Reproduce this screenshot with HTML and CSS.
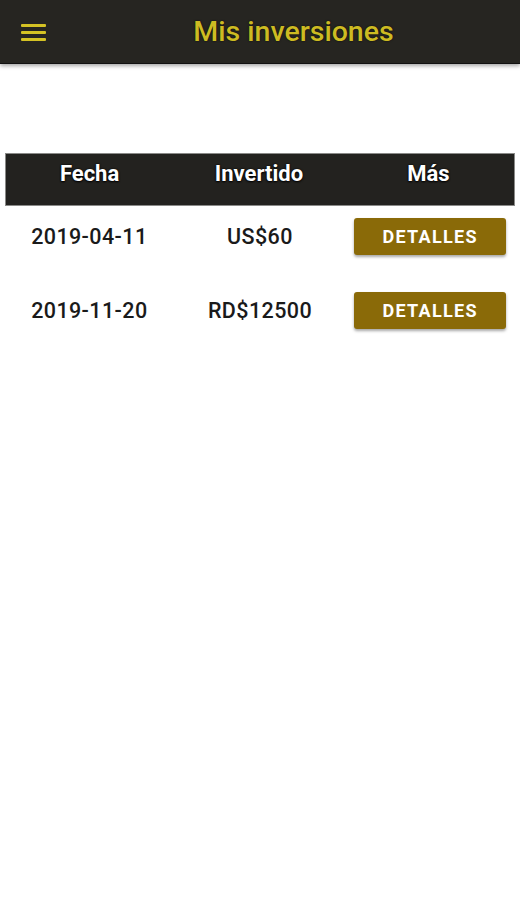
FILE: index.html
```html
<!DOCTYPE html>
<html lang="es">
<head>
    <meta charset="UTF-8">
    <meta name="viewport" content="width=device-width, initial-scale=1.0">
    <title>Mis inversiones</title>
    <link rel="stylesheet" href="styles.css">
</head>
<body>
<header class="topBar">
    <button class="menuButton" aria-label="Menu">
        <svg width="26" height="20" viewBox="0 0 26 20">
            <rect x="0" y="2" width="25" height="3" rx="1" fill="#d4c224"/>
            <rect x="0" y="9" width="25" height="3" rx="1" fill="#d4c224"/>
            <rect x="0" y="16" width="25" height="3" rx="1" fill="#d4c224"/>
        </svg>
    </button>
    <h1 class="topTitle">Mis inversiones</h1>
</header>
<main class="content">
    <table class="investTable">
        <thead>
        <tr>
            <th>Fecha</th>
            <th>Invertido</th>
            <th>Más</th>
        </tr>
        </thead>
        <tbody>
        <tr>
            <td>2019-04-11</td>
            <td>US$60</td>
            <td><button class="detailButton">DETALLES</button></td>
        </tr>
        <tr>
            <td>2019-11-20</td>
            <td>RD$12500</td>
            <td><button class="detailButton">DETALLES</button></td>
        </tr>
        </tbody>
    </table>
</main>
</body>
</html>
```

FILE: styles.css
```css
* {
    box-sizing: border-box;
    margin: 0;
    padding: 0;
    font-family: Roboto, 'Noto Sans', sans-serif;
}

body {
    background-color: #fff;
    width: 520px;
    height: 900px;
}

/* TOP BAR */
.topBar {
    height: 64px;
    background-color: #262521;
    display: flex;
    align-items: center;
    padding-left: 21px;
    box-shadow: 0 2px 4px rgba(0, 0, 0, 0.35);
    border-bottom: 1px solid #111;
}

.menuButton {
    background: none;
    border: none;
    width: 26px;
    height: 20px;
    display: flex;
    margin-top: 1px;
}

.topTitle {
    flex: 1;
    text-align: center;
    color: #cdbb22;
    font-size: 28.5px;
    font-weight: 500;
    margin-left: 20px;
    margin-top: -1px;
    text-shadow: 0 0 2px rgba(0, 0, 0, 0.8);
}

/* TABLE */
.content {
    padding: 89px 5px 0 5px;
}

.investTable {
    width: 510px;
    border-collapse: collapse;
    table-layout: fixed;
}

.investTable thead tr {
    background-color: #23221f;
    border: 1px solid #8a8a88;
}

.investTable th {
    height: 52px;
    color: #fff;
    font-size: 22px;
    font-weight: 700;
    text-shadow: 0 0 2px #000, 0 1px 2px #000;
    padding-bottom: 12px;
    padding-right: 2px;
}

.investTable td {
    text-align: center;
    font-size: 21.5px;
    font-weight: 500;
    color: #1a1a1a;
    letter-spacing: 0.4px;
    height: 74px;
}

.investTable tbody tr:first-child td {
    height: 62px;
}

.investTable tbody tr:nth-child(2) td {
    height: 86px;
}

.investTable td:first-child {
    padding-right: 2px;
}

.detailButton {
    width: 152px;
    height: 37px;
    margin-left: 1px;
    background-color: #8a6a08;
    color: #fff;
    border: none;
    border-radius: 3px;
    font-size: 18px;
    font-weight: 700;
    letter-spacing: 1.3px;
    box-shadow: 0 2px 3px rgba(0, 0, 0, 0.35);
}
```
